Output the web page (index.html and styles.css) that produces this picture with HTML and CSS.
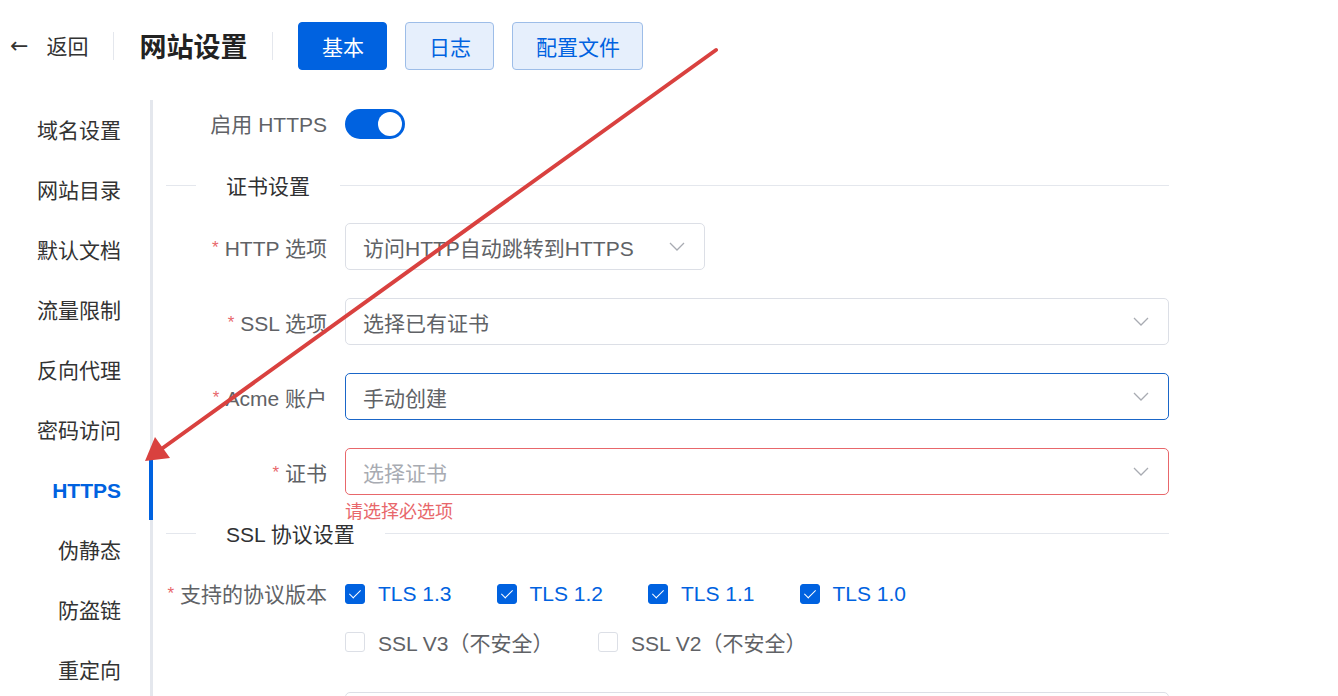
FILE: index.html
```html
<!DOCTYPE html>
<html lang="zh-CN">
<head>
  <meta charset="UTF-8">
  <meta name="viewport" content="width=device-width, initial-scale=1.0">
  <title>网站设置</title>
  <link rel="stylesheet" href="styles.css">
</head>
<body>
  <div class="header">
    <div class="back"><span class="back-arrow">←</span>返回</div>
    <div class="divider-v"></div>
    <h1 class="title">网站设置</h1>
    <div class="divider-v"></div>
    <div class="tabs">
      <button class="tab active">基本</button>
      <button class="tab">日志</button>
      <button class="tab">配置文件</button>
    </div>
  </div>

  <div class="main">
    <ul class="side-menu">
      <li>域名设置</li>
      <li>网站目录</li>
      <li>默认文档</li>
      <li>流量限制</li>
      <li>反向代理</li>
      <li>密码访问</li>
      <li class="active">HTTPS</li>
      <li>伪静态</li>
      <li>防盗链</li>
      <li>重定向</li>
    </ul>

    <div class="content">
      <div class="form-row switch-row">
        <label class="form-label">启用 HTTPS</label>
        <div class="switch on"><span class="knob"></span></div>
      </div>

      <div class="section-title"><span>证书设置</span></div>

      <div class="form-row">
        <label class="form-label required">HTTP 选项</label>
        <div class="select short">
          <span class="value">访问HTTP自动跳转到HTTPS</span>
          <svg class="chevron" viewBox="0 0 16 10"><path d="M1 1l7 7 7-7" /></svg>
        </div>
      </div>

      <div class="form-row">
        <label class="form-label required">SSL 选项</label>
        <div class="select">
          <span class="value">选择已有证书</span>
          <svg class="chevron" viewBox="0 0 16 10"><path d="M1 1l7 7 7-7" /></svg>
        </div>
      </div>

      <div class="form-row">
        <label class="form-label required">Acme 账户</label>
        <div class="select focused">
          <span class="value">手动创建</span>
          <svg class="chevron" viewBox="0 0 16 10"><path d="M1 1l7 7 7-7" /></svg>
        </div>
      </div>

      <div class="form-row has-error">
        <label class="form-label required">证书</label>
        <div class="field">
          <div class="select error">
            <span class="value placeholder">选择证书</span>
            <svg class="chevron" viewBox="0 0 16 10"><path d="M1 1l7 7 7-7" /></svg>
          </div>
          <div class="error-text">请选择必选项</div>
        </div>
      </div>

      <div class="section-title"><span>SSL 协议设置</span></div>

      <div class="form-row protocols">
        <label class="form-label required">支持的协议版本</label>
        <div class="checks">
          <label class="check checked"><span class="box"></span>TLS 1.3</label>
          <label class="check checked"><span class="box"></span>TLS 1.2</label>
          <label class="check checked"><span class="box"></span>TLS 1.1</label>
          <label class="check checked"><span class="box"></span>TLS 1.0</label>
          <label class="check wide"><span class="box"></span>SSL V3（不安全）</label>
          <label class="check wide"><span class="box"></span>SSL V2（不安全）</label>
        </div>
      </div>

      <div class="form-row next-row">
        <div class="form-label"></div>
        <div class="select"></div>
      </div>
    </div>
  </div>

  <!-- annotation arrow pointing at the HTTPS menu item -->
  <svg class="annotation" width="1338" height="696" viewBox="0 0 1338 696">
    <line x1="716" y1="50" x2="160" y2="450" />
    <polygon points="145,461 155,437 170,458" />
  </svg>
</body>
</html>
```

FILE: styles.css
```css
:root {
  --primary: #0062e0;
  --primary-light: #e6effc;
  --primary-border: #9dbde8;
  --text: #303133;
  --text-regular: #606266;
  --placeholder: #a8abb2;
  --border: #dcdfe6;
  --line: #e4e7ed;
  --danger: #e8676b;
}

* {
  margin: 0;
  padding: 0;
  box-sizing: border-box;
}

body {
  font-family: "Liberation Sans", "Noto Sans CJK SC", sans-serif;
  color: var(--text);
  background: #fff;
  width: 1338px;
  height: 696px;
  overflow: hidden;
  position: relative;
}

/* Top bar */
.header {
  display: flex;
  align-items: center;
  height: 48px;
  margin-top: 22px;
  padding-left: 10px;
}

.back {
  display: flex;
  align-items: center;
  font-size: 21px;
  color: #333;
  margin-top: -2px;
}

.back-arrow {
  font-size: 22px;
  margin-right: 18px;
  font-family: "DejaVu Sans", sans-serif;
}

.divider-v {
  width: 1px;
  height: 28px;
  background: var(--line);
  margin: 0 25px;
}

.title {
  font-size: 27px;
  font-weight: 700;
  color: #222;
  margin-top: -2px;
}

.tabs {
  display: flex;
  gap: 18px;
}

.tab {
  height: 48px;
  width: 89px;
  font-family: inherit;
  font-size: 21px;
  border-radius: 4px;
  border: 1px solid var(--primary-border);
  background: var(--primary-light);
  color: var(--primary);
  cursor: pointer;
}

.tab:last-child {
  width: 131px;
}

.tab.active {
  background: var(--primary);
  border-color: var(--primary);
  color: #fff;
}

/* Body: side menu + form */
.main {
  display: flex;
  margin-top: 30px;
}

.side-menu {
  list-style: none;
  width: 153px;
  border-right: 3px solid var(--line);
  height: 600px;
}

.side-menu li {
  height: 60px;
  line-height: 62px;
  text-align: right;
  padding-right: 28px;
  font-size: 21px;
  color: #333;
  margin-right: -3px;
  border-right: 4px solid transparent;
}

.side-menu li.active {
  color: var(--primary);
  font-weight: 700;
  border-right-color: var(--primary);
}

.content {
  width: 1016px;
  padding-left: 13px;
  display: flex;
  flex-direction: column;
}

.form-row {
  display: flex;
  align-items: center;
  margin-bottom: 28px;
}

.form-label {
  width: 161px;
  flex-shrink: 0;
  margin-right: 18px;
  text-align: right;
  font-size: 21px;
  color: var(--text-regular);
}

.form-label.required::before {
  content: "*";
  color: var(--danger);
  margin-right: 6px;
  font-size: 17px;
  vertical-align: 3px;
}

.switch-row {
  margin-top: 9px;
  margin-bottom: 0;
  height: 30px;
}

.switch-row .form-label {
  margin-top: -3px;
}

.switch {
  width: 60px;
  height: 30px;
  border-radius: 15px;
  background: var(--border);
  position: relative;
}

.switch.on {
  background: var(--primary);
}

.switch .knob {
  position: absolute;
  top: 3px;
  left: 3px;
  width: 24px;
  height: 24px;
  border-radius: 50%;
  background: #fff;
}

.switch.on .knob {
  left: 33px;
}

/* Section divider with a title */
.section-title {
  display: flex;
  align-items: center;
  height: 30px;
  margin: 31px 0 23px;
  font-size: 21px;
  color: var(--text);
}

.section-title::before {
  content: "";
  width: 30px;
  height: 1px;
  background: var(--line);
}

.section-title::after {
  content: "";
  flex: 1;
  height: 1px;
  background: var(--line);
}

.section-title span {
  padding: 0 30px;
}

/* Select boxes */
.field {
  flex: 1;
  position: relative;
}

.select {
  flex: 1;
  height: 47px;
  display: flex;
  align-items: center;
  justify-content: space-between;
  padding: 0 19px 0 17px;
  border: 1px solid var(--border);
  border-radius: 5px;
  font-size: 21px;
  color: var(--text-regular);
}

.select.short {
  flex: none;
  width: 360px;
}

.select.focused {
  border-color: #1a66c8;
}

.select.error {
  border-color: var(--danger);
}

.value.placeholder {
  color: var(--placeholder);
}

.chevron {
  width: 16px;
  height: 10px;
  fill: none;
  stroke: #a8abb2;
  stroke-width: 1.3;
}

.has-error {
  margin-bottom: 0;
}

.error-text {
  position: absolute;
  top: 49px;
  left: 0;
  font-size: 18px;
  color: var(--danger);
}

.has-error + .section-title {
  margin-top: 23px;
}

/* Protocol check boxes */
.protocols {
  align-items: flex-start;
  margin-top: 10px;
  margin-bottom: 37px;
}

.protocols .form-label {
  line-height: 26px;
}

.checks {
  display: flex;
  flex-wrap: wrap;
  width: 620px;
  row-gap: 22px;
}

.check {
  display: flex;
  align-items: center;
  width: 151.5px;
  height: 26px;
  font-size: 21px;
  color: var(--text-regular);
}

.check.wide {
  width: 253px;
}

.check .box {
  width: 20px;
  height: 20px;
  border: 1px solid var(--border);
  border-radius: 3px;
  margin-right: 13px;
  position: relative;
}

.check.checked {
  color: var(--primary);
}

.check.checked .box {
  background: var(--primary);
  border-color: var(--primary);
}

.check.checked .box::after {
  content: "";
  position: absolute;
  left: 6px;
  top: 2px;
  width: 5px;
  height: 10px;
  border: solid #fff;
  border-width: 0 1.5px 1.5px 0;
  transform: rotate(45deg);
}

.next-row .form-label {
  height: 47px;
}

/* Overlay arrow */
.annotation {
  position: absolute;
  left: 0;
  top: 0;
  pointer-events: none;
}

.annotation line {
  stroke: #d9413f;
  stroke-width: 4;
  stroke-linecap: round;
}

.annotation polygon {
  fill: #d9413f;
}
```
